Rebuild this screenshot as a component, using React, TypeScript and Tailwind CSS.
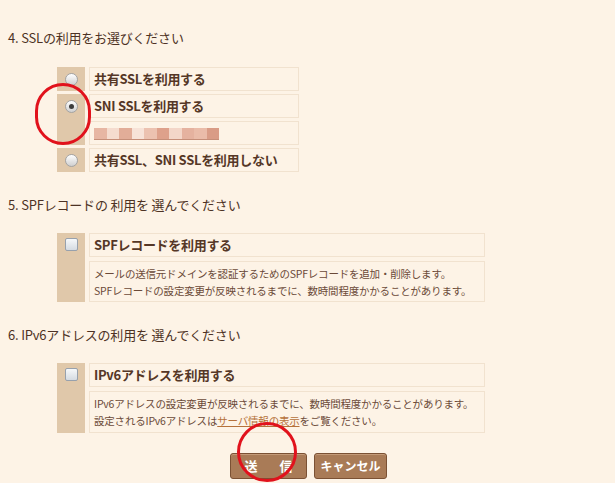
import type { ReactNode } from "react";

const FONT = { fontFamily: '"Noto Sans CJK JP", "Noto Sans", sans-serif' };

function Radio({ checked = false }: { checked?: boolean }) {
  return (
    <span className="flex h-[13px] w-[13px] items-center justify-center rounded-full border border-[#a3a3a3] bg-gradient-to-b from-[#ffffff] to-[#cfcfcf]">
      {checked && <span className="h-[5px] w-[5px] rounded-full bg-[#3d3d3d]" />}
    </span>
  );
}

function Checkbox() {
  return (
    <span className="block h-[13px] w-[13px] rounded-[2px] border border-[#97a1ad] bg-gradient-to-b from-[#f6f8fa] to-[#d5dbe2]" />
  );
}

function Cell({ children, className = "" }: { children?: ReactNode; className?: string }) {
  return (
    <div className={`whitespace-nowrap border border-[#f1e2cf] bg-[#fdf3e6] px-[4px] ${className}`}>{children}</div>
  );
}

function Label({ children }: { children: ReactNode }) {
  return (
    <Cell className="flex items-center text-[13px] font-bold tracking-[-0.3px] text-[#553726]">{children}</Cell>
  );
}

function Heading({ children }: { children: ReactNode }) {
  return <div className="pl-[8px] text-[13px] leading-[16px] tracking-[-0.2px] text-[#4d3224]">{children}</div>;
}

export default function App() {
  const blur = ["#e7b6a3", "#f5dccf", "#e2ad98", "#f7e3d8", "#ecc2b0", "#dea18b", "#f3d6c8", "#e5b29f", "#eabca9", "#d99c86"];

  return (
    <div className="relative h-[483px] w-[615px] overflow-hidden bg-[#fdf3e6]" style={FONT}>
      <div className="flex flex-col pt-[30px]">
        <Heading>4. SSLの利用をお選びください</Heading>

        {/* SSL options */}
        <div className="ml-[57px] mt-[21px] grid grid-cols-[28px_210px] grid-rows-[24px_24px_24px_24px] gap-x-[4px] gap-y-[3px]">
          <div className="flex items-center justify-center bg-[#e0c8aa]">
            <Radio />
          </div>
          <Label>共有SSLを利用する</Label>

          <div className="row-span-2 flex justify-center bg-[#e0c8aa] pt-[6px]">
            <Radio checked />
          </div>
          <Label>SNI SSLを利用する</Label>
          <Cell className="flex items-center">
            <div className="flex flex-col pt-[2px]">
              <div className="flex h-[11px]">
                {blur.map((c, i) => (
                  <span key={i} className="h-full w-[12.5px]" style={{ backgroundColor: c }} />
                ))}
              </div>
              <span className="h-[1px] w-[125px] bg-[#c58e78]" />
            </div>
          </Cell>

          <div className="flex items-center justify-center bg-[#e0c8aa]">
            <Radio />
          </div>
          <Label>共有SSL、SNI SSLを利用しない</Label>
        </div>

        <div className="mt-[25px]">
          <Heading>5. SPFレコードの 利用を 選んでください</Heading>
        </div>

        {/* SPF */}
        <div className="ml-[57px] mt-[20px] grid grid-cols-[28px_396px] grid-rows-[24px_41px] gap-x-[4px] gap-y-[4px]">
          <div className="row-span-2 flex justify-center bg-[#e0c8aa] pt-[5px]">
            <Checkbox />
          </div>
          <Label>SPFレコードを利用する</Label>
          <Cell className="flex flex-col justify-center text-[10.5px] leading-[17px] tracking-[-0.2px] text-[#6b4a38]">
            <span>メールの送信元ドメインを認証するためのSPFレコードを追加・削除します。</span>
            <span>SPFレコードの設定変更が反映されるまでに、数時間程度かかることがあります。</span>
          </Cell>
        </div>

        <div className="mt-[25px]">
          <Heading>6. IPv6アドレスの利用を 選んでください</Heading>
        </div>

        {/* IPv6 */}
        <div className="ml-[57px] mt-[20px] grid grid-cols-[28px_396px] grid-rows-[24px_42px] gap-x-[4px] gap-y-[4px]">
          <div className="row-span-2 flex justify-center bg-[#e0c8aa] pt-[5px]">
            <Checkbox />
          </div>
          <Label>IPv6アドレスを利用する</Label>
          <Cell className="flex flex-col justify-center text-[10.5px] leading-[17px] tracking-[-0.2px] text-[#6b4a38]">
            <span>IPv6アドレスの設定変更が反映されるまでに、数時間程度かかることがあります。</span>
            <span>
              設定されるIPv6アドレスは<span className="text-[#b5713a] underline">サーバ情報の表示</span>をご覧ください。
            </span>
          </Cell>
        </div>

        {/* buttons */}
        <div className="mt-[20px] flex justify-center gap-[7px] pl-[2px]">
          <button className="flex h-[26px] w-[77px] items-center justify-center gap-[22px] rounded-[3px] border border-[#7b5134] bg-[#a97b57] text-[13px] font-bold text-white shadow-[inset_0_1px_0_#c49a78]">
            <span>送</span>
            <span>信</span>
          </button>
          <button className="flex h-[26px] w-[73px] items-center justify-center rounded-[3px] border border-[#7b5134] bg-[#a97b57] text-[12px] font-bold text-white shadow-[inset_0_1px_0_#c49a78]">
            キャンセル
          </button>
        </div>
      </div>

      {/* red annotation circles */}
      <span className="absolute left-[35px] top-[83px] h-[62px] w-[56px] rounded-full border-[3px] border-[#e1121c]" />
      <span className="absolute left-[237px] top-[422px] h-[60px] w-[60px] rounded-full border-[3px] border-[#e1121c]" />
    </div>
  );
}
